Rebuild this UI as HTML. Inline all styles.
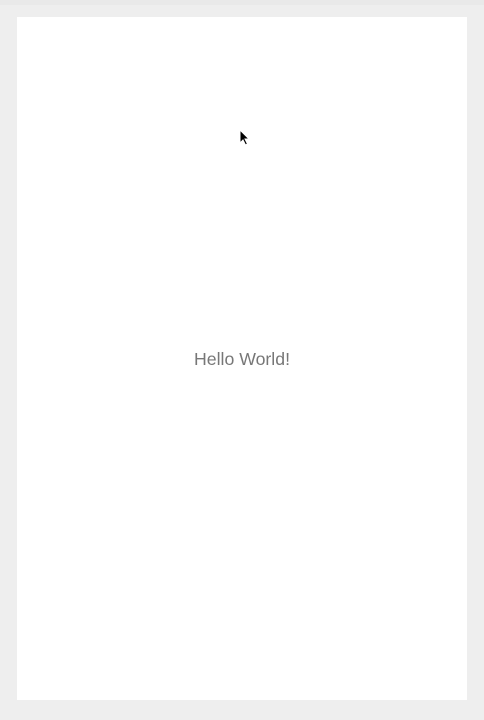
<!DOCTYPE html>
<html><head><style>
html,body{margin:0;padding:0;width:484px;height:720px;background:#eeeeee;overflow:hidden}
.top{position:absolute;left:0;top:0;width:484px;height:5px;background:#e9e9e9}
.panel{position:absolute;left:17px;top:17px;width:450px;height:683px;background:#fff}
.t{position:absolute;left:0;width:484px;top:349px;text-align:center;font-family:"Liberation Sans",sans-serif;font-size:17.7px;color:#777}
svg{position:absolute;left:239px;top:129px}
</style></head><body>
<div class="top"></div>
<div class="panel"></div>
<div class="t">Hello World!</div>
<svg width="12" height="18" viewBox="0 0 12 18"><path d="M1 1 L1 14 L4 11 L6.5 16 L8.5 15 L6 10 L10 10 Z" fill="#000" stroke="#fff" stroke-width="1"/></svg>
</body></html>
